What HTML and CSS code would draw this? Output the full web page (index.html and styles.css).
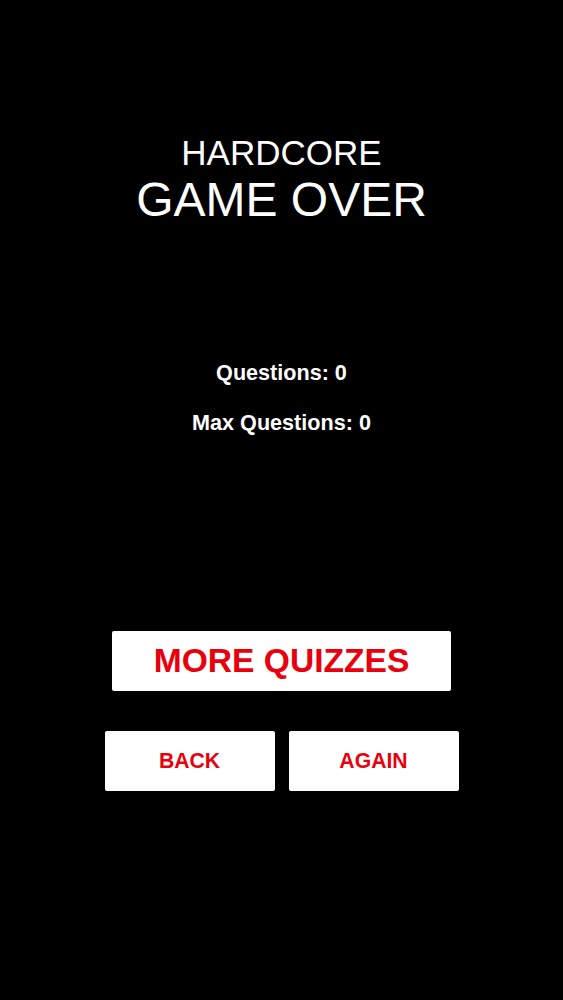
FILE: index.html
```html
<!DOCTYPE html>
<html lang="en">
<head>
  <meta charset="UTF-8">
  <meta name="viewport" content="width=device-width, initial-scale=1.0">
  <title>Game Over</title>
  <link rel="stylesheet" href="styles.css">
</head>
<body>
  <div class="screen">
    <div class="title">
      <div class="mode">HARDCORE</div>
      <h1>GAME OVER</h1>
    </div>
    <div class="stats">
      <div class="stat">Questions: 0</div>
      <div class="stat">Max Questions: 0</div>
    </div>
    <div class="actions">
      <button class="btn btn-large">MORE QUIZZES</button>
      <div class="btn-row">
        <button class="btn btn-small">BACK</button>
        <button class="btn btn-small">AGAIN</button>
      </div>
    </div>
  </div>
</body>
</html>
```

FILE: styles.css
```css
body {
  margin: 0;
  background: #000;
  color: #fff;
  font-family: 'Liberation Sans', Arial, sans-serif;
}
.screen {
  display: flex;
  flex-direction: column;
  align-items: center;
  min-height: 1000px;
  padding-top: 133px;
  box-sizing: border-box;
}
.title {
  text-align: center;
}
.mode {
  font-size: 35px;
  line-height: 40px;
}
.title h1 {
  margin: 1px 0 0;
  font-size: 48px;
  line-height: 52px;
  font-weight: normal;
}
.stats {
  margin-top: 134px;
  display: flex;
  flex-direction: column;
  align-items: center;
  gap: 24px;
}
.stat {
  font-size: 21.6px;
  line-height: 26px;
  font-weight: bold;
}
.actions {
  margin-top: 195px;
  display: flex;
  flex-direction: column;
  align-items: center;
  gap: 40px;
}
.btn {
  display: flex;
  align-items: center;
  justify-content: center;
  height: 60px;
  padding: 0;
  border: none;
  border-radius: 2px;
  background: #fff;
  color: #e8000d;
  font-family: inherit;
  font-weight: bold;
  cursor: pointer;
}
.btn-large {
  width: 339px;
  font-size: 33.6px;
}
.btn-row {
  display: flex;
  gap: 14px;
}
.btn-small {
  width: 170px;
  font-size: 21.2px;
}
```
